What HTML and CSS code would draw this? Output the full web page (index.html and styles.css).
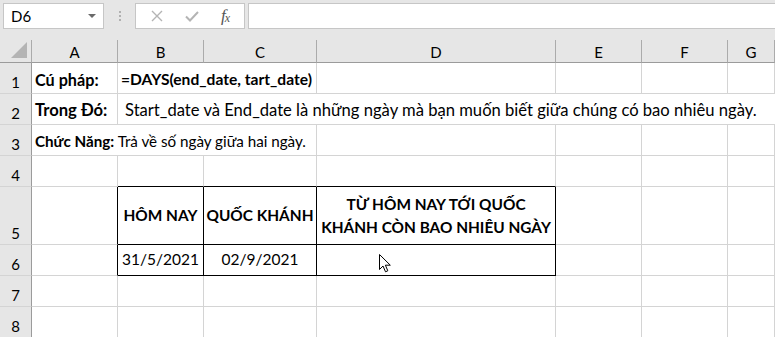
FILE: index.html
```html
<!DOCTYPE html>
<html lang="vi">
<head>
    <meta charset="UTF-8">
    <title>DAYS - Excel</title>
    <link rel="stylesheet" href="styles.css">
</head>
<body>
    <div class="toolbar">
        <div class="namebox">
            <span>D6</span>
            <span class="caret"></span>
        </div>
        <div class="grip"><i></i><i></i><i></i></div>
        <div class="fxbox">
            <svg class="ico" width="12" height="12" viewBox="0 0 12 12">
                <path d="M1 1 L11 11 M11 1 L1 11" stroke="#b4b4b4" stroke-width="1.4" fill="none"/>
            </svg>
            <svg class="ico" width="14" height="11" viewBox="0 0 14 11">
                <path d="M1 5.5 L5 9.5 L13 1" stroke="#b4b4b4" stroke-width="2" fill="none"/>
            </svg>
            <span class="fx">f<sub>x</sub></span>
        </div>
        <div class="formula"></div>
    </div>

    <div class="sheet">
        <div class="corner"><span class="tri"></span></div>
        <div class="colh">A</div>
        <div class="colh">B</div>
        <div class="colh">C</div>
        <div class="colh">D</div>
        <div class="colh">E</div>
        <div class="colh">F</div>
        <div class="colh">G</div>

        <!-- row 1 -->
        <div class="rowh">1</div>
        <div class="cell big bold">Cú pháp:</div>
        <div class="cell formula-text bold span2">=DAYS(end_date, tart_date)</div>
        <div class="cell"></div>
        <div class="cell"></div>
        <div class="cell"></div>
        <div class="cell"></div>

        <!-- row 2 -->
        <div class="rowh">2</div>
        <div class="cell text bold">Trong Đó:</div>
        <div class="cell text span-rest indent">Start_date và End_date là những ngày mà bạn muốn biết giữa chúng có bao nhiêu ngày.</div>

        <!-- row 3 -->
        <div class="rowh">3</div>
        <div class="cell small span3"><b>Chức Năng:</b>&nbsp;Trả về số ngày giữa hai ngày.</div>
        <div class="cell"></div>
        <div class="cell"></div>
        <div class="cell"></div>
        <div class="cell"></div>

        <!-- row 4 -->
        <div class="rowh">4</div>
        <div class="cell"></div>
        <div class="cell line-b"></div>
        <div class="cell line-b"></div>
        <div class="cell line-b"></div>
        <div class="cell"></div>
        <div class="cell"></div>
        <div class="cell"></div>

        <!-- row 5 -->
        <div class="rowh">5</div>
        <div class="cell line-r"></div>
        <div class="cell tb head">HÔM NAY</div>
        <div class="cell tb head">QUỐC KHÁNH</div>
        <div class="cell tb head wrap">TỪ HÔM NAY TỚI QUỐC KHÁNH CÒN BAO NHIÊU NGÀY</div>
        <div class="cell"></div>
        <div class="cell"></div>
        <div class="cell"></div>

        <!-- row 6 -->
        <div class="rowh">6</div>
        <div class="cell line-r"></div>
        <div class="cell tb date">31/5/2021</div>
        <div class="cell tb date">02/9/2021</div>
        <div class="cell tb date"></div>
        <div class="cell"></div>
        <div class="cell"></div>
        <div class="cell"></div>

        <!-- row 7 -->
        <div class="rowh">7</div>
        <div class="cell"></div>
        <div class="cell"></div>
        <div class="cell"></div>
        <div class="cell"></div>
        <div class="cell"></div>
        <div class="cell"></div>
        <div class="cell"></div>

        <!-- row 8 -->
        <div class="rowh">8</div>
        <div class="cell"></div>
        <div class="cell"></div>
        <div class="cell"></div>
        <div class="cell"></div>
        <div class="cell"></div>
        <div class="cell"></div>
        <div class="cell"></div>

        <svg class="cursor" width="13" height="19" viewBox="0 0 13 19">
            <path d="M0.5 0.5 L0.5 15.5 L4 12 L6.5 17.8 L8.8 16.8 L6.4 11.2 L11.3 11.2 Z" fill="#fff" stroke="#000" stroke-width="1"/>
        </svg>
    </div>
</body>
</html>
```

FILE: styles.css
```css
body {
    margin: 0;
    background: #e6e6e6;
    font-family: Lato, "Liberation Sans", sans-serif;
    color: #000;
    width: 775px;
    height: 337px;
    overflow: hidden;
}

.toolbar {
    display: flex;
    align-items: center;
    height: 26px;
    padding: 3px 0 11px 3px;
}

.namebox {
    width: 101px;
    height: 26px;
    box-sizing: border-box;
    background: #fff;
    border: 1px solid #c6c6c6;
    display: flex;
    align-items: center;
    justify-content: space-between;
    padding: 0 7px 0 7px;
    font-size: 15px;
}

.caret {
    width: 0;
    height: 0;
    border-left: 4px solid transparent;
    border-right: 4px solid transparent;
    border-top: 4px solid #6a6a6a;
}

.grip {
    width: 31px;
    display: flex;
    flex-direction: column;
    align-items: center;
    gap: 2px;
}
.grip i {
    width: 2px;
    height: 2px;
    background: #b0b0b0;
}

.fxbox {
    width: 110px;
    height: 26px;
    box-sizing: border-box;
    background: #fff;
    border: 1px solid #c6c6c6;
    display: flex;
    align-items: center;
    padding-left: 15px;
    gap: 22px;
}

.fx {
    font-family: "Liberation Serif", serif;
    font-style: italic;
    font-size: 17px;
    color: #555;
    letter-spacing: -1px;
}
.fx sub {
    font-size: 12px;
    vertical-align: -1px;
}

.formula {
    flex: 1;
    height: 26px;
    box-sizing: border-box;
    margin-left: 3px;
    background: #fff;
    border: 1px solid #c6c6c6;
    border-right: none;
}

.sheet {
    position: relative;
    display: grid;
    grid-template-columns: 32px 86px 86px 113px 239px 86px 86px 1fr;
    grid-template-rows: 23px 31px 31px 31px 31px 58px 31px 31px 31px;
    background: #fff;
}

.corner,
.colh,
.rowh {
    background: #e6e6e6;
    box-sizing: border-box;
    border-right: 1px solid #ababab;
    border-bottom: 1px solid #ababab;
}

.corner {
    position: relative;
    border-bottom-color: #9b9b9b;
}
.tri {
    position: absolute;
    right: 4px;
    bottom: 4px;
    width: 0;
    height: 0;
    border-left: 16px solid transparent;
    border-bottom: 16px solid #b4b4b4;
}

.colh {
    display: flex;
    align-items: center;
    justify-content: center;
    font-size: 15px;
    padding-top: 1px;
    border-bottom-color: #9b9b9b;
}

.rowh {
    display: flex;
    align-items: flex-end;
    justify-content: center;
    font-size: 15px;
    line-height: 1;
    padding-bottom: 3px;
    border-right-color: #9b9b9b;
    border-bottom-color: #d4d4d4;
}

.cell {
    box-sizing: border-box;
    border-right: 1px solid #d4d4d4;
    border-bottom: 1px solid #d4d4d4;
    display: flex;
    align-items: flex-end;
    padding: 0 3px 5px;
    line-height: 1;
    white-space: nowrap;
}

.big { font-size: 16.2px; }
.formula-text { font-size: 15.6px; }
.bold { font-weight: bold; }
.text { font-size: 16.6px; }
.small { font-size: 15.2px; padding-bottom: 6px; }
.indent { padding-left: 7px; }

.span2 { grid-column: span 2; }
.span3 { grid-column: span 3; }
.span-rest { grid-column: 3 / -1; border-right: none; }

.line-b { border-bottom-color: #000; }
.line-r { border-right-color: #000; }

.tb {
    border-right-color: #000;
    border-bottom-color: #000;
    justify-content: center;
    text-align: center;
}

.head {
    align-items: center;
    font-weight: bold;
    font-size: 15.4px;
    line-height: 23px;
    padding: 0 1px;
}
.head.wrap {
    white-space: normal;
    padding: 0 4px;
}

.date {
    font-size: 15.5px;
    align-items: center;
    padding: 0 3px;
}

.cursor {
    position: absolute;
    left: 379px;
    top: 214px;
}
```
